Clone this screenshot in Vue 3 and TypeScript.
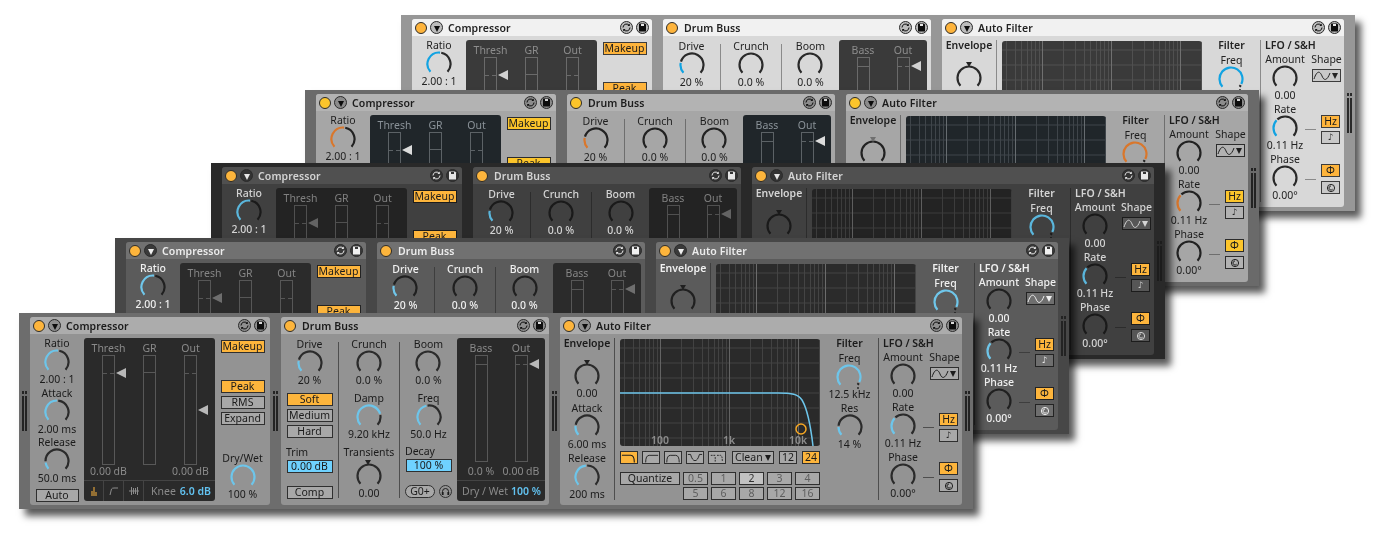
<template>
  <div class="stage">
    <div v-for="skin in skins" :key="skin" class="rack" :class="skin">
      <template v-for="dev in devices" :key="dev.id">
        <div class="slot"><span class="grip"></span></div>
        <section class="device" :class="dev.id">
          <header class="head">
            <span class="power"></span>
            <span v-if="dev.fold" class="fold"><i></i></span>
            <span class="name">{{ dev.name }}</span>
            <span class="round">
              <svg viewBox="0 0 13 13" width="13" height="13">
                <path d="M3 6.5a3.5 3.5 0 0 1 6-2.4M10 6.5a3.5 3.5 0 0 1-6 2.4" class="swap" />
                <path d="M9.8 2.6v2.4H7.4zM3.2 10.4V8h2.4z" class="swap-tip" />
              </svg>
            </span>
            <span class="round">
              <svg viewBox="0 0 13 13" width="13" height="13">
                <path d="M3 2.5h6l1 1v7H3z" class="save" />
                <rect x="5" y="3" width="3" height="2" class="save-slot" />
              </svg>
            </span>
          </header>

          <div class="body">
            <template v-for="(sec, i) in dev.sections" :key="i">
              <div v-if="sec.type === 'sep'" class="sep" :class="sec.cls"></div>

              <div v-else-if="sec.type === 'col'" class="col" :class="sec.cls">
                <template v-for="(it, j) in sec.items" :key="j">
                  <div v-if="it.kind === 'knob'" class="knob" :class="[it.cls, { marked: it.mark }]">
                    <span v-if="it.label" class="lbl">{{ it.label }}</span>
                    <span class="dial">
                      <svg viewBox="0 0 26 26" width="26" height="26">
                        <path :d="restArc(it.pos)" class="arc-rest" />
                        <path v-if="it.pos > 0" :d="onArc(it.pos)" class="arc-on" />
                      </svg>
                    </span>
                    <span class="val">{{ it.value }}</span>
                  </div>

                  <span v-else-if="it.kind === 'text'" class="txt" :class="it.cls">{{ it.text }}</span>

                  <button v-else-if="it.kind === 'btn'" class="btn" :class="[it.mode, it.cls]">{{ it.text }}</button>

                  <div v-else-if="it.kind === 'go'" class="go">
                    <span class="pill">G0+</span>
                    <span class="phones">
                      <svg viewBox="0 0 13 13" width="13" height="13">
                        <path d="M3.5 8V6.5a3 3 0 0 1 6 0V8" class="phones-band" />
                        <rect x="2.8" y="7" width="1.8" height="3" class="phones-cup" />
                        <rect x="8.4" y="7" width="1.8" height="3" class="phones-cup" />
                      </svg>
                    </span>
                  </div>

                  <div v-else-if="it.kind === 'shape'" class="shape">
                    <span class="lbl">Shape</span>
                    <span class="drop">
                      <svg viewBox="0 0 18 10" width="18" height="10">
                        <path d="M1 8C4 -1 7 0 9 5S14 10 17 2" class="wave" />
                      </svg>
                      <i class="down"></i>
                    </span>
                  </div>

                  <div v-else-if="it.kind === 'side'" class="side" :class="it.cls">
                    <span class="wire"></span>
                    <div class="stack">
                      <button class="btn narrow" :class="it.top.mode">{{ it.top.text }}</button>
                      <button class="btn narrow" :class="it.bottom.mode">
                        <svg v-if="it.bottom.ring" viewBox="0 0 12 10" width="12" height="10">
                          <circle cx="6" cy="5" r="3.6" class="ring" />
                          <path d="M6 3a2 2 0 1 0 1.6 3.2" class="ring" />
                        </svg>
                        <span v-else class="note">♪</span>
                      </button>
                    </div>
                  </div>
                </template>
              </div>

              <div v-else-if="sec.type === 'meters'" class="panel" :class="sec.cls">
                <div class="meters">
                  <div v-for="m in sec.meters" :key="m.label" class="meter">
                    <span class="m-lbl">{{ m.label }}</span>
                    <div class="track">
                      <i class="tick" :class="{ dash: m.arrow }" :style="{ top: m.tick + 'px' }"></i>
                      <i v-if="m.arrow" class="arrow" :style="{ top: m.arrow + 'px' }"></i>
                    </div>
                    <span class="m-val">{{ m.value }}</span>
                  </div>
                </div>
                <div v-if="sec.foot === 'knee'" class="foot">
                  <span class="tool">
                    <svg viewBox="0 0 12 12" width="12" height="12">
                      <path d="M3.5 6h1v5h-1zM5.5 2h1v9h-1zM7.5 7h1v4h-1z" class="bars" />
                    </svg>
                  </span>
                  <span class="tool">
                    <svg viewBox="0 0 12 12" width="12" height="12"><path d="M2 10L3.5 4Q4 3 6 3H10" class="tool-line" /></svg>
                  </span>
                  <span class="tool">
                    <svg viewBox="0 0 12 12" width="12" height="12">
                      <path d="M1 6H11M3.5 2V10M5.5 3V9M7.5 3V9M9.5 2V10" class="tool-line" />
                    </svg>
                  </span>
                  <span class="foot-lbl knee">Knee</span>
                  <b class="foot-val">6.0 dB</b>
                </div>
                <div v-else class="foot">
                  <span class="foot-lbl wet">Dry / Wet</span>
                  <b class="foot-val">100 %</b>
                </div>
              </div>

              <div v-else-if="sec.type === 'graph'" class="filter">
                <div class="graph">
                  <svg viewBox="0 0 200 107" width="200" height="107">
                    <path v-for="y in hLines" :key="y" :d="`M0 ${y}H200`" class="grid" />
                    <path v-for="l in vLines" :key="l.x" :d="`M${l.x} 0V107`" :class="l.major ? 'grid-major' : 'grid'" />
                    <path d="M0 54H158C172 54 178 55 182 61C188 71 191 90 193 107" class="curve" />
                    <circle cx="181" cy="90" r="5" class="cutoff" />
                  </svg>
                  <span class="scale s100">100</span>
                  <span class="scale s1k">1k</span>
                  <span class="scale s10k">10k</span>
                </div>
                <div class="modes">
                  <button v-for="(d, n) in filterShapes" :key="n" class="btn type" :class="{ on: n === 0 }">
                    <svg viewBox="0 0 18 12" width="18" height="12"><path :d="d" class="type-line" :class="{ dashed: n === 4 }" /></svg>
                  </button>
                  <span class="drop clean">Clean<i class="down"></i></span>
                  <button class="btn slope">12</button>
                  <button class="btn slope on">24</button>
                </div>
                <div class="quant">
                  <button class="btn">Quantize</button>
                  <button
                    v-for="q in quantize"
                    :key="q"
                    class="btn"
                    :class="q === '2' ? 'lit' : 'dim'"
                  >{{ q }}</button>
                </div>
              </div>
            </template>
          </div>
        </section>
      </template>
      <div class="slot"><span class="grip"></span></div>
    </div>
  </div>
</template>

<script setup lang="ts">
const skins = ['light', 'mid', 'dark', 'dusk', 'front']

function polar(deg: number) {
  const rad = (deg * Math.PI) / 180
  return `${(13 + 11.5 * Math.sin(rad)).toFixed(2)} ${(13 - 11.5 * Math.cos(rad)).toFixed(2)}`
}

function arc(from: number, to: number) {
  const large = to - from > 180 ? 1 : 0
  return `M${polar(from)}A11.5 11.5 0 ${large} 1 ${polar(to)}`
}

const sweep = 132

function onArc(pos: number) {
  return arc(-sweep, -sweep + pos * 2 * sweep)
}

function restArc(pos: number) {
  if (pos >= 1) return ''
  return arc(-sweep + pos * 2 * sweep + (pos > 0 ? 6 : 0), sweep)
}

const knob = (label: string, value: string, pos: number, cls = '', mark = false) => ({
  kind: 'knob', label, value, pos, cls, mark,
})
const btn = (text: string, mode = '', cls = '') => ({ kind: 'btn', text, mode, cls })
const text = (value: string, cls = '') => ({ kind: 'text', text: value, cls })

const devices: any[] = [
  {
    id: 'comp',
    name: 'Compressor',
    fold: true,
    sections: [
      {
        type: 'col',
        cls: 'comp-left',
        items: [
          knob('Ratio', '2.00 : 1', 0.52),
          knob('Attack', '2.00 ms', 0.5),
          knob('Release', '50.0 ms', 0.13),
          btn('Auto', '', 'auto'),
        ],
      },
      {
        type: 'meters',
        cls: 'comp-meters',
        foot: 'knee',
        meters: [
          { label: 'Thresh', value: '0.00 dB', tick: 17, arrow: 12 },
          { label: 'GR', value: '', tick: 16 },
          { label: 'Out', value: '0.00 dB', tick: 17, arrow: 49 },
        ],
      },
      {
        type: 'col',
        cls: 'comp-right',
        items: [
          btn('Makeup', 'on', 'wide makeup'),
          btn('Peak', 'on', 'wide'),
          btn('RMS', '', 'wide'),
          btn('Expand', '', 'wide'),
          knob('Dry/Wet', '100 %', 1, 'drywet'),
        ],
      },
    ],
  },
  {
    id: 'buss',
    name: 'Drum Buss',
    fold: false,
    sections: [
      {
        type: 'col',
        cls: 'buss-col first',
        items: [
          knob('Drive', '20 %', 0.2),
          btn('Soft', 'on', 'pick soft'),
          btn('Medium', '', 'pick'),
          btn('Hard', '', 'pick'),
          text('Trim', 'left trim'),
          btn('0.00 dB', 'blue', 'pick'),
          btn('Comp', '', 'pick push'),
        ],
      },
      { type: 'sep', cls: 'sep-buss' },
      {
        type: 'col',
        cls: 'buss-col',
        items: [
          knob('Crunch', '0.0 %', 0),
          knob('Damp', '9.20 kHz', 0.78, 'step'),
          knob('Transients', '0.00', 0, 'step', true),
        ],
      },
      { type: 'sep', cls: 'sep-buss' },
      {
        type: 'col',
        cls: 'buss-col last',
        items: [
          knob('Boom', '0.0 %', 0),
          knob('Freq', '50.0 Hz', 0.45, 'step'),
          text('Decay', 'left trim'),
          btn('100 %', 'blue', 'pick'),
          { kind: 'go' },
        ],
      },
      {
        type: 'meters',
        cls: 'buss-meters',
        foot: 'wet',
        meters: [
          { label: 'Bass', value: '0.0 %', tick: 8 },
          { label: 'Out', value: '0.00 dB', tick: 8, arrow: 3 },
        ],
      },
    ],
  },
  {
    id: 'auto',
    name: 'Auto Filter',
    fold: true,
    sections: [
      {
        type: 'col',
        cls: 'env',
        items: [
          text('Envelope', 'title'),
          knob('', '0.00', 0, 'env-top', true),
          knob('Attack', '6.00 ms', 0.18),
          knob('Release', '200 ms', 0.48),
        ],
      },
      { type: 'sep', cls: 'sep-auto' },
      { type: 'graph' },
      {
        type: 'col',
        cls: 'cutoff-col',
        items: [text('Filter', 'title'), knob('Freq', '12.5 kHz', 0.94, 'modulated'), knob('Res', '14 %', 0.16)],
      },
      { type: 'sep', cls: 'sep-auto' },
      {
        type: 'col',
        cls: 'lfo',
        items: [
          text('LFO / S&H', 'title span'),
          knob('Amount', '0.00', 0),
          { kind: 'shape' },
          knob('Rate', '0.11 Hz', 0.32),
          { kind: 'side', cls: 'wired', top: { text: 'Hz', mode: 'on' }, bottom: { text: '', mode: '' } },
          knob('Phase', '0.00°', 0),
          { kind: 'side', cls: 'wired low', top: { text: 'Φ', mode: 'on' }, bottom: { mode: '', ring: true } },
        ],
      },
    ],
  },
]

const hLines = [9, 24, 39, 54, 69, 84, 99]

const vLines = (() => {
  const out: { x: number; major: boolean }[] = []
  for (let dec = 1; dec < 5; dec++) {
    for (let m = 1; m < 10; m++) {
      const x = 40 + 69 * (dec - 2 + Math.log10(m))
      if (x > 0 && x < 200) out.push({ x: Math.round(x) + 0.5, major: m === 1 })
    }
  }
  return out
})()

const filterShapes = [
  'M1 3H11Q15 3 15 11',
  'M3 11Q3 3 7 3H17',
  'M2 11Q2 3 6 3H12Q16 3 16 11',
  'M1 2H4Q6 9 9 9T14 2H17',
  'M2 3H7M9 3H13Q15 3 15 10M7 5V10',
]

const quantize = ['0.5', '1', '2', '3', '4', '5', '6', '8', '12', '16']
</script>

<style>
html,
body {
  margin: 0;
  background: #fff;
}
</style>

<style scoped>
.stage {
  position: relative;
  width: 1384px;
  height: 542px;
  overflow: hidden;
  background: #fff;
  font-family: 'Noto Sans', sans-serif;
  font-size: 10.5px;
  filter: blur(0.35px);
}

/* windows stacked on the canvas, one skin each */
.rack {
  position: absolute;
  display: flex;
  box-sizing: border-box;
  width: 954px;
  height: 196px;
  padding: 4px 0;
  background: var(--outer);
  box-shadow: 6px 7px 7px rgba(0, 0, 0, 0.65);
  color: var(--text);
}

.light {
  left: 401px;
  top: 15px;
  --outer: #979797;
  --dev: #d8d8d8;
  --head: #f1f1f1;
  --text: #232323;
  --head-text: #232323;
  --on: #feb43c;
  --arc: #12a3e2;
  --rest: #2a2a2a;
  --panel: #3a3a3a;
  --ptext: #8d8d8d;
  --pline: #6a6a6a;
  --arrow: #d2d2d2;
  --grid: #505050;
  --grid-major: #707070;
  --btn: #c9c9c9;
  --line: #3c3c3c;
  --dim: #8d8d8d;
  --grip: #2a2a2a;
  --sep: #8a8a8a;
  --round: #bcbcbc;
  --icon: #0d0d0d;
  --icon-inv: #e8e8e8;
  --mark: #222;
}

.mid {
  left: 305px;
  top: 90px;
  --outer: #6a6a6a;
  --dev: #a6a6a6;
  --head: #b3b3b3;
  --text: #1d1d1d;
  --head-text: #1d1d1d;
  --on: #fcc52b;
  --arc: #d9772c;
  --rest: #222;
  --panel: #20262a;
  --ptext: #8a9298;
  --pline: #5c6266;
  --arrow: #dcdcdc;
  --grid: #3f454a;
  --grid-major: #666c70;
  --btn: #b2b2b2;
  --line: #2c2c2c;
  --dim: #6a6a6a;
  --grip: #222;
  --sep: #6e6e6e;
  --round: #8b8b8b;
  --icon: #0d0d0d;
  --icon-inv: #d0d0d0;
  --mark: #6f6f6f;
}

.dark {
  left: 211px;
  top: 163px;
  --outer: #292929;
  --dev: #404040;
  --head: #505050;
  --text: #d4d4d4;
  --head-text: #d4d4d4;
  --on: #fdb53c;
  --arc: #5ab6dc;
  --rest: #1a1a1a;
  --panel: #232323;
  --ptext: #808080;
  --pline: #505050;
  --arrow: #636363;
  --grid: #3c3c3c;
  --grid-major: #5e5e5e;
  --btn: #565656;
  --line: #1c1c1c;
  --dim: #9a9a9a;
  --grip: #1c1c1c;
  --sep: #2c2c2c;
  --round: #333;
  --icon: #e6e6e6;
  --icon-inv: #333;
  --mark: #1a1a1a;
}

.dusk {
  left: 115px;
  top: 238px;
  --outer: #474747;
  --dev: #5b5b5b;
  --head: #717171;
  --text: #f0f0f0;
  --head-text: #ececec;
  --on: #fdb53c;
  --arc: #6fc6ea;
  --rest: #202020;
  --panel: #2b2b2b;
  --ptext: #858585;
  --pline: #575757;
  --arrow: #6e6e6e;
  --grid: #444;
  --grid-major: #6c6c6c;
  --btn: #6e6e6e;
  --line: #232323;
  --dim: #b5b5b5;
  --grip: #232323;
  --sep: #3e3e3e;
  --round: #3a3a3a;
  --icon: #f0f0f0;
  --icon-inv: #3a3a3a;
  --mark: #202020;
}

.front {
  left: 19px;
  top: 313px;
  --outer: #6d6d6d;
  --dev: #939393;
  --head: #acacac;
  --text: #1b1b1b;
  --head-text: #1b1b1b;
  --on: #fdb53c;
  --arc: #6dc5ea;
  --rest: #2b2b2b;
  --panel: #2a2a2a;
  --ptext: #8a8a8a;
  --pline: #585858;
  --arrow: #b8b8b8;
  --grid: #424242;
  --grid-major: #636363;
  --btn: #a8a8a8;
  --line: #2f2f2f;
  --dim: #5e5e5e;
  --grip: #232323;
  --sep: #4e4e4e;
  --round: #8e8e8e;
  --icon: #0d0d0d;
  --icon-inv: #dcdcdc;
  --mark: #222;
}

.dark .lbl,
.dark .val,
.dusk .lbl,
.dusk .val {
  font-weight: 500;
}

.slot {
  display: flex;
  flex: none;
  align-items: center;
  justify-content: center;
  width: 11px;
}

.grip {
  width: 5px;
  height: 40px;
  background:
    linear-gradient(to bottom, transparent 3px, var(--outer) 3px 5px, transparent 5px),
    linear-gradient(to right, var(--grip) 2px, transparent 2px 3px, var(--grip) 3px);
}

.device {
  display: flex;
  flex: none;
  flex-direction: column;
  height: 188px;
  overflow: hidden;
  border-radius: 3px;
  background: var(--dev);
}

.comp { width: 240px; }
.buss { width: 268px; }
.auto { width: 402px; }

.head {
  display: flex;
  flex: none;
  align-items: center;
  height: 17px;
  padding: 0 3px;
  background: var(--head);
}

.power {
  flex: none;
  box-sizing: border-box;
  width: 12px;
  height: 12px;
  border: 1px solid #2b2b2b;
  border-radius: 50%;
  background: var(--on);
}

.fold {
  display: flex;
  flex: none;
  align-items: center;
  justify-content: center;
  box-sizing: border-box;
  width: 13px;
  height: 13px;
  margin-left: 3px;
  border: 1px solid #2b2b2b;
  border-radius: 50%;
  background: var(--round);
}

.fold i {
  width: 0;
  height: 0;
  margin-top: 2px;
  border-top: 6px solid var(--icon);
  border-right: 3.5px solid transparent;
  border-left: 3.5px solid transparent;
}

.name {
  flex: 1;
  margin-left: 5px;
  color: var(--head-text);
  font-size: 10.5px;
  font-weight: 600;
  letter-spacing: 0.1px;
}

.buss .name {
  margin-left: 6px;
}

.round {
  display: flex;
  flex: none;
  box-sizing: border-box;
  width: 13px;
  height: 13px;
  margin-left: 3px;
  overflow: hidden;
  border: 1px solid #2b2b2b;
  border-radius: 50%;
  background: var(--round);
}

.round svg {
  flex: none;
  margin: -1px;
}

.swap {
  fill: none;
  stroke: var(--icon);
  stroke-width: 1;
}

.swap-tip {
  fill: var(--icon);
}

.save {
  fill: var(--icon);
}

.save-slot {
  fill: var(--icon-inv);
}

.body {
  display: flex;
  flex: 1;
  min-height: 0;
}

.col {
  display: flex;
  flex: none;
  flex-direction: column;
  align-items: center;
  box-sizing: border-box;
}

.knob {
  position: relative;
  display: flex;
  flex: none;
  flex-direction: column;
  align-items: center;
}

.lbl,
.val,
.txt {
  height: 12px;
  line-height: 12px;
  white-space: nowrap;
}

.dial {
  position: relative;
  display: block;
  width: 26px;
  height: 26px;
}

.dial svg {
  display: block;
}

.val {
  margin-top: -2px;
}

.marked .dial {
  margin-top: 5px;
}

.marked .dial::before {
  content: '';
  position: absolute;
  top: -3px;
  left: 9.5px;
  border-top: 5px solid var(--mark);
  border-right: 3.5px solid transparent;
  border-left: 3.5px solid transparent;
}

.modulated .dial::after {
  content: '';
  position: absolute;
  right: 3px;
  bottom: 1px;
  width: 2px;
  height: 2px;
  border-radius: 50%;
  background: var(--rest);
}

.arc-rest,
.arc-on {
  fill: none;
  stroke-width: 2.2;
}

.arc-rest {
  stroke: var(--rest);
}

.arc-on {
  stroke: var(--arc);
}

.btn {
  display: flex;
  flex: none;
  align-items: center;
  justify-content: center;
  box-sizing: border-box;
  height: 13px;
  margin: 0;
  padding: 0;
  border: 1px solid var(--line);
  background: var(--btn);
  color: var(--text);
  font: inherit;
  line-height: 11px;
}

.btn.on {
  background: var(--on);
  color: #1b1b1b;
}

.btn.blue {
  background: #6fd2ff;
  color: #1b1b1b;
}

.comp-left {
  width: 54px;
  padding-top: 3px;
  gap: 1.5px;
}

.btn.auto {
  width: 43px;
  margin-top: 3px;
}

.comp-right {
  width: 55px;
  padding-top: 6px;
  gap: 3px;
}

.btn.wide {
  width: 44px;
}

.btn.makeup {
  margin-bottom: 24px;
}

.drywet {
  margin-top: 24px;
}

.panel {
  display: flex;
  flex: none;
  flex-direction: column;
  height: 163px;
  margin-top: 4px;
  overflow: hidden;
  border-radius: 3px;
  background: var(--panel);
  color: var(--ptext);
}

.comp-meters {
  width: 131px;
}

.buss-meters {
  width: 88px;
}

.meters {
  display: flex;
  flex: 1;
  padding: 4px 0 0 4px;
}

.meter {
  display: flex;
  flex-direction: column;
  align-items: center;
  width: 41px;
}

.buss-meters .meter {
  width: 40px;
}

.m-lbl,
.m-val {
  height: 12px;
  line-height: 12px;
  white-space: nowrap;
}

.track {
  position: relative;
  box-sizing: border-box;
  width: 13px;
  height: 110px;
  margin-top: 1px;
  border: 1px solid var(--pline);
}

.buss-meters .track {
  height: 107px;
}

.buss-meters .m-val {
  margin-top: 3px;
}

.tick {
  position: absolute;
  left: 0;
  right: 0;
  height: 1px;
  background: var(--pline);
}

.tick.dash {
  background: linear-gradient(to right, var(--pline) 40%, transparent 40% 60%, var(--pline) 60%);
}

.arrow {
  position: absolute;
  left: 13px;
  width: 0;
  height: 0;
  border-top: 5px solid transparent;
  border-right: 10px solid var(--arrow);
  border-bottom: 5px solid transparent;
}

.foot {
  display: flex;
  flex: none;
  align-items: center;
  height: 20px;
  border-top: 1px solid #444;
  white-space: nowrap;
}

.tool {
  display: flex;
  align-items: center;
  justify-content: center;
  box-sizing: border-box;
  width: 20px;
  height: 100%;
  border-right: 1px solid #444;
}

.bars {
  fill: var(--on);
}

.tool-line {
  fill: none;
  stroke: #8c8c8c;
  stroke-width: 1;
}

.foot-lbl {
  flex: 1;
}

.knee {
  padding-left: 7px;
}

.wet {
  padding-left: 5px;
}

.foot-val {
  padding-right: 4px;
  color: #62c2f0;
  font-weight: 600;
}

.buss-col {
  width: 57px;
  padding-top: 4px;
}

.buss-col:not(.first):not(.last) {
  width: 60px;
}

.sep {
  flex: none;
  width: 1px;
  background: var(--sep);
}

.sep-buss {
  margin: 8px 0 7px;
}

.sep-auto {
  margin: 4px 0 5px;
}

.btn.pick {
  width: 46px;
}

.btn.soft {
  margin-top: 7px;
}

.btn.pick + .btn.pick {
  margin-top: 3px;
}

.txt.left {
  align-self: flex-start;
  margin-left: 5px;
}

.txt.trim {
  margin-top: 8px;
}

.txt.trim + .btn.pick {
  margin-top: 2px;
}

.btn.pick + .btn.pick.push {
  margin-top: 13px;
}

.knob.step {
  margin-top: 6px;
}

.last .txt.trim {
  margin-top: 5px;
}

.go {
  display: flex;
  align-items: center;
  gap: 4px;
  margin-top: 13px;
  align-self: flex-start;
  margin-left: 5px;
}

.pill {
  box-sizing: border-box;
  width: 30px;
  height: 13px;
  border: 1px solid var(--line);
  border-radius: 7px;
  background: var(--btn);
  line-height: 11px;
  text-align: center;
}

.phones {
  display: block;
  box-sizing: border-box;
  width: 13px;
  height: 13px;
  overflow: hidden;
  border: 1px solid var(--line);
  border-radius: 50%;
}

.phones svg {
  display: block;
  margin: -1px;
}

.phones-band {
  fill: none;
  stroke: var(--text);
}

.phones-cup {
  fill: var(--text);
}

.env {
  width: 54px;
  padding-top: 3px;
  gap: 2.5px;
}

.knob.env-top {
  margin-top: 6.5px;
}

.txt.title {
  font-weight: 600;
}

.filter {
  flex: none;
  display: flex;
  flex-direction: column;
  width: 200px;
  margin-left: 5px;
  padding-top: 5px;
}

.graph {
  position: relative;
  flex: none;
  width: 200px;
  height: 107px;
  overflow: hidden;
  border-radius: 3px;
  background: var(--panel);
}

.graph svg {
  display: block;
}

.grid,
.grid-major {
  fill: none;
  stroke-width: 1;
}

.grid {
  stroke: var(--grid);
}

.grid-major {
  stroke: var(--grid-major);
}

.curve {
  fill: none;
  stroke: #6dc5ea;
  stroke-width: 1.5;
}

.cutoff {
  fill: none;
  stroke: #f5a623;
  stroke-width: 1.5;
}

.scale {
  position: absolute;
  bottom: 0;
  color: #8c8c8c;
  font-weight: 600;
  line-height: 12px;
  transform: translateX(-50%);
}

.s100 { left: 40px; }
.s1k { left: 109px; }
.s10k { left: 178px; }

.modes {
  display: flex;
  flex: none;
  align-items: center;
  margin-top: 5px;
}

.btn.type {
  width: 18px;
  height: 13px;
  margin-right: 4px;
}

.type-line {
  fill: none;
  stroke: var(--text);
  stroke-width: 1;
}

.on .type-line {
  stroke: #1b1b1b;
  stroke-width: 1.2;
}

.dashed {
  stroke-dasharray: 2 1;
}

.drop {
  display: flex;
  align-items: center;
  box-sizing: border-box;
  height: 13px;
  border: 1px solid var(--line);
  background: var(--btn);
}

.clean {
  justify-content: space-between;
  width: 42px;
  margin-left: 2px;
  padding: 0 2px;
  line-height: 11px;
}

.down {
  flex: none;
  width: 0;
  height: 0;
  border-top: 6px solid var(--text);
  border-right: 3.5px solid transparent;
  border-left: 3.5px solid transparent;
}

.btn.slope {
  width: 18px;
  margin-left: 5px;
}

.quant {
  display: grid;
  flex: none;
  grid-template-columns: 60px repeat(5, 25px);
  gap: 2px 3px;
  margin-top: 8px;
}

.quant .btn:nth-child(7) {
  grid-column-start: 2;
}

.btn.dim {
  color: var(--dim);
}

.btn.lit {
  background: #c2c2c2;
  color: #333;
}

.cutoff-col {
  width: 57px;
  margin-left: 1px;
  padding-top: 3px;
  gap: 2.5px;
}

.lfo {
  display: grid;
  flex: 1;
  grid-template-columns: 48px 35px;
  align-content: start;
  align-items: start;
  justify-items: center;
  padding-top: 3px;
  row-gap: 2px;
}

.txt.span {
  grid-column: 1 / -1;
  justify-self: start;
  margin-left: 4px;
}

.shape {
  display: flex;
  flex-direction: column;
  align-items: center;
  gap: 4px;
}

.shape .drop {
  justify-content: space-between;
  width: 29px;
  padding: 0 2px 0 0;
}

.wave {
  fill: none;
  stroke: var(--text);
  stroke-width: 1;
}

.side {
  display: flex;
  align-items: center;
  justify-content: flex-end;
  justify-self: end;
  padding: 12px 4px 0 0;
}

.side.low {
  padding-top: 11px;
}

.side.low .stack {
  gap: 4px;
}

.wire {
  flex: none;
  width: 11px;
  height: 1px;
  margin-right: 5px;
  background: var(--sep);
}

.stack {
  display: flex;
  flex-direction: column;
  gap: 3px;
}

.btn.narrow {
  width: 19px;
}

.note {
  font-family: 'DejaVu Sans', sans-serif;
  font-size: 9px;
  line-height: 11px;
}

.ring {
  fill: none;
  stroke: var(--text);
  stroke-width: 1;
}
</style>
